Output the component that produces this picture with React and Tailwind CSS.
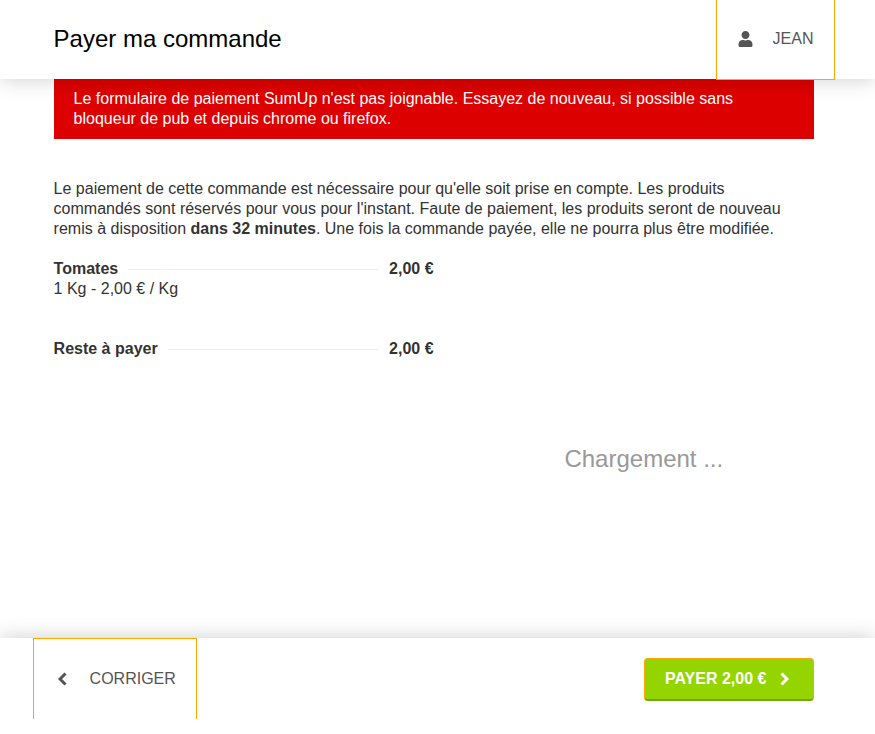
import { FaUser } from "react-icons/fa";

const Line = ({ label, price }) => (
  <div className="flex items-center font-bold h-5">
    <span className="shrink-0">{label}</span>
    <span className="flex-1 mx-[10px] border-t border-[#eeeeee] mt-px"></span>
    <span className="shrink-0">{price}</span>
  </div>
);

const Chevron = ({ points }) => (
  <svg viewBox="0 0 9 14" className="w-[9px] h-[14px] shrink-0" fill="none" stroke="currentColor" strokeWidth="3">
    <polyline points={points} />
  </svg>
);

export default function App() {
  return (
    <div className="h-screen flex flex-col bg-white text-[16px] leading-5 text-[#333333] font-['Liberation_Sans',Arial,sans-serif] overflow-hidden">
      <header className="h-[79px] shrink-0 flex justify-between pl-[53.6px] pr-10 bg-white shadow-[0_0_20px_rgba(0,0,0,0.2)] relative z-10">
        <h1 className="text-[24px] leading-[78px] text-black">Payer ma commande</h1>
        <button className="w-[119px] h-[80px] flex items-center pl-[20.5px] pb-[2px] border border-t-0 border-[#ffa500] text-[#555555] bg-white">
          <FaUser className="w-[15px] h-[16px] mt-[1px]" />
          <span className="ml-[20.1px]">JEAN</span>
        </button>
      </header>

      <main className="flex-1 pl-[53.6px] pr-[61px]">
        <div className="bg-[#dd0000] text-white px-5 py-[10px]">
          Le formulaire de paiement SumUp n'est pas joignable. Essayez de nouveau, si possible sans bloqueur de pub et depuis chrome ou firefox.
        </div>
        <p className="mt-10">
          Le paiement de cette commande est nécessaire pour qu'elle soit prise en compte. Les produits commandés sont réservés pour vous pour l'instant. Faute de paiement, les produits seront de nouveau remis à disposition <strong>dans 32 minutes</strong>. Une fois la commande payée, elle ne pourra plus être modifiée.
        </p>
        <div className="flex mt-5">
          <div className="w-[380px] shrink-0">
            <Line label="Tomates" price="2,00 €" />
            <div>1 Kg - 2,00 € / Kg</div>
            <div className="mt-10">
              <Line label="Reste à payer" price="2,00 €" />
            </div>
          </div>
          <div className="w-[420px] pt-[180px] pl-[40px] text-center text-[24px] leading-[40px] text-[#999999]">
            Chargement ...
          </div>
        </div>
      </main>

      <footer className="h-[96px] shrink-0 flex justify-between pr-[61px] pl-[33px] bg-white shadow-[0_0_20px_rgba(0,0,0,0.2)] relative z-10">
        <button className="w-[164px] h-[81px] flex items-center pl-[24px] border border-b-0 border-[#ffa500] text-[#555555]">
          <Chevron points="7.5,1.5 2,7 7.5,12.5" />
          <span className="ml-[22.6px]">CORRIGER</span>
        </button>
        <button className="mt-[20px] w-[170px] h-[43px] flex items-center pl-5 rounded border border-[#ffa500] border-b-2 border-b-[#6fa800] bg-[#94d500] text-white font-bold">
          PAYER 2,00 €
          <span className="ml-[14px]">
            <Chevron points="1.5,1.5 7,7 1.5,12.5" />
          </span>
        </button>
      </footer>
    </div>
  );
}
